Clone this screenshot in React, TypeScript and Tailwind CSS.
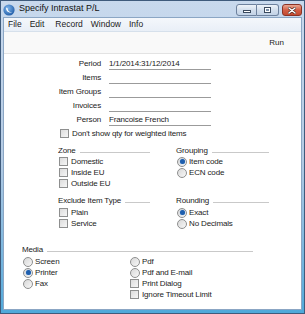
import React from 'react';

const Check: React.FC<{ label: string }> = ({ label }) => (
  <div className="flex h-[11px] items-center">
    <div className="ml-[1px] h-[9px] w-[9px] border border-[#8e8f8f] bg-gradient-to-br from-[#dcdcdc] to-[#f6f6f6]" />
    <span className="ml-[3px]">{label}</span>
  </div>
);

const Radio: React.FC<{ label: string; on?: boolean }> = ({ label, on }) => (
  <div className="flex h-[11px] items-center">
    <div className="ml-[1px] flex h-[10px] w-[10px] items-center justify-center rounded-full border border-[#8e8f8f] bg-gradient-to-br from-[#d8d8d8] to-[#f8f8f8]">
      {on && <div className="h-[5px] w-[5px] rounded-full bg-[#1f5fae] shadow-[0_0_1px_#6aa0e0]" />}
    </div>
    <span className="ml-[2px]">{label}</span>
  </div>
);

const Header: React.FC<{ label: string }> = ({ label }) => (
  <div className="flex h-[11px] items-center">
    <span>{label}</span>
    <div className="ml-[4px] mt-[4px] h-px flex-1 bg-[#c9c9c9]" />
  </div>
);

const fields = [
  { label: 'Period', value: '1/1/2014:31/12/2014' },
  { label: 'Items', value: '' },
  { label: 'Item Groups', value: '' },
  { label: 'Invoices', value: '' },
  { label: 'Person', value: 'Francoise French' },
];

export default function App() {
  return (
    <div className="flex h-[314px] w-[305px] flex-col border border-[#3f5b7c] bg-gradient-to-b from-[#c8d9ed] via-[#b4cbe4] to-[#4fa9da] font-['Liberation_Sans',Arial,sans-serif] text-[8px] text-[#1b1b1b]">
      {/* Title bar */}
      <div className="flex h-[16px] items-center pl-[2px] pr-[2px]">
        <svg width="12" height="12" viewBox="0 0 12 12" className="mt-[1px]">
          <defs>
            <radialGradient id="lg" cx="40%" cy="35%" r="70%">
              <stop offset="0" stopColor="#7fb6ec" />
              <stop offset="1" stopColor="#1d5aa6" />
            </radialGradient>
          </defs>
          <circle cx="6" cy="6" r="5.6" fill="url(#lg)" />
          <path d="M3.2 3.5 C2.6 6.8 5.6 9.4 9.4 8.2 C7 8.6 4.6 7 4.6 4.2 Z" fill="#ffffff" />
        </svg>
        <span className="ml-[4px] text-[9px] text-[#111]">Specify Intrastat P/L</span>
        <div className="ml-auto mt-[2px] flex items-start">
          <div className="flex h-[12px] w-[21px] items-center justify-center rounded-l-[3px] border border-[#6d819d] bg-gradient-to-b from-[#eef3f9] via-[#d2deec] to-[#c2d2e6]">
            <div className="mt-[3px] h-[3px] w-[8px] border border-[#3b4a5e] bg-white" />
          </div>
          <div className="flex h-[12px] w-[22px] items-center justify-center rounded-r-[3px] border border-l-0 border-[#6d819d] bg-gradient-to-b from-[#eef3f9] via-[#d2deec] to-[#c2d2e6]">
            <div className="h-[6px] w-[7px] border border-[#3b4a5e] bg-white p-[1px]">
              <div className="h-full w-full bg-[#7b8fa8]" />
            </div>
          </div>
          <div className="ml-[3px] flex h-[12px] w-[20px] items-center justify-center rounded-[3px] border border-[#8a3325] bg-gradient-to-b from-[#e9a792] via-[#d35f46] to-[#c34a30]">
            <svg width="8" height="7" viewBox="0 0 8 7">
              <path d="M1 1 L7 6 M7 1 L1 6" stroke="#3a1a12" strokeWidth="2.6" strokeLinecap="round" />
              <path d="M1 1 L7 6 M7 1 L1 6" stroke="#ffffff" strokeWidth="1.6" strokeLinecap="round" />
            </svg>
          </div>
        </div>
      </div>

      {/* Inner window */}
      <div className="mx-[2px] mb-[3px] flex flex-1 flex-col border border-[#8ba6c4] bg-white">
        {/* Menu */}
        <div className="flex h-[14px] items-center gap-[8px] border-b border-[#d6e0eb] bg-gradient-to-b from-[#f4f7fb] to-[#e9eff7] pl-[4px] text-[8.5px]">
          <span>File</span>
          <span>Edit</span>
          <span className="ml-[3px]">Record</span>
          <span>Window</span>
          <span>Info</span>
        </div>
        {/* Toolbar */}
        <div className="flex h-[22px] items-center justify-end border-b border-[#e3e3e3] bg-[#f9f9f9] pr-[17px]">
          <span>Run</span>
        </div>

        {/* Content */}
        <div className="flex flex-1 flex-col bg-white pt-[3px] tracking-[-0.15px]">
          {fields.map((f) => (
            <div key={f.label} className="flex h-[14px] items-center">
              <div className="w-[97px] text-right">{f.label}</div>
              <div className="ml-[8px] flex h-[12px] w-[102px] items-center border-b border-[#9b9b9b] pt-[1px]">
                {f.value}
              </div>
            </div>
          ))}
          <div className="ml-[55px] flex h-[13px] items-center">
            <Check label="Don't show qty for weighted items" />
          </div>

          <div className="mt-[5px] ml-[54px] flex items-start gap-[26px]">
            <div className="flex w-[92px] flex-col">
              <Header label="Zone" />
              <Check label="Domestic" />
              <Check label="Inside EU" />
              <Check label="Outside EU" />
              <div className="mt-[6px]">
                <Header label="Exclude Item Type" />
              </div>
              <div className="mt-[1px]">
                <Check label="Plain" />
              </div>
              <Check label="Service" />
            </div>
            <div className="flex w-[93px] flex-col">
              <Header label="Grouping" />
              <Radio label="Item code" on />
              <Radio label="ECN code" />
              <div className="mt-[17px]">
                <Header label="Rounding" />
              </div>
              <div className="mt-[1px]">
                <Radio label="Exact" on />
              </div>
              <Radio label="No Decimals" />
            </div>
          </div>

          <div className="mt-[15px] ml-[18px] flex w-[231px] flex-col">
            <Header label="Media" />
            <div className="mt-[1px] flex">
              <div className="flex w-[107px] flex-col">
                <Radio label="Screen" />
                <Radio label="Printer" on />
                <Radio label="Fax" />
              </div>
              <div className="flex flex-col">
                <Radio label="Pdf" />
                <Radio label="Pdf and E-mail" />
                <Check label="Print Dialog" />
                <Check label="Ignore Timeout Limit" />
              </div>
            </div>
          </div>
        </div>
      </div>
    </div>
  );
}
